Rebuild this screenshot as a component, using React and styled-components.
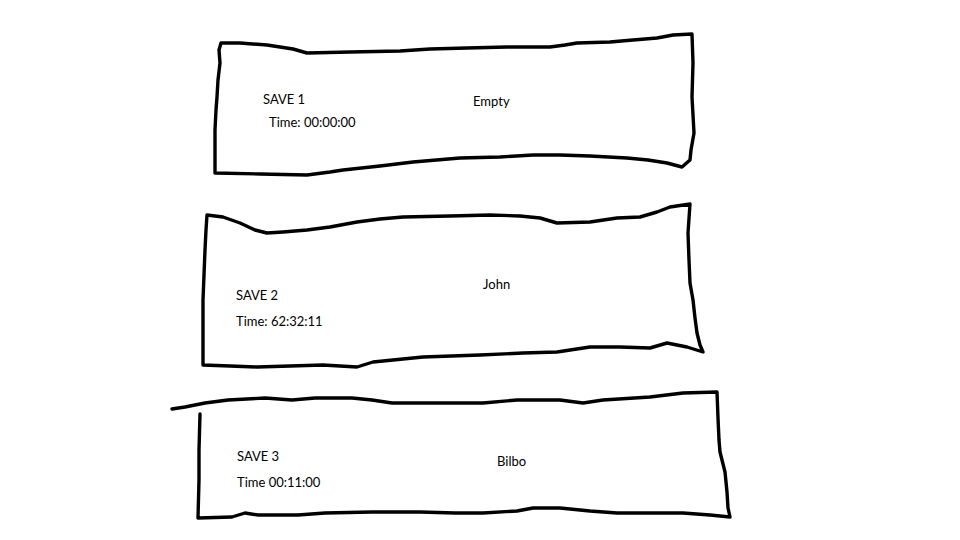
import styled, { createGlobalStyle } from "styled-components";

// sketch data: box placement on the page, outline stroke, text offsets
// --------------------------------------------------------------------

const saves = [
  {
    slot: "SAVE 1",
    time: "Time: 00:00:00",
    name: "Empty",
    box: { left: 211, top: 31, width: 487, height: 147 },
    labelX: 52,
    labelTop: 60,
    timeIndent: 6,
    timeGap: 7,
    nameX: 262,
    nameTop: 62,
    outline:
      "M221,43 L240,43 L267,45 L280,47 L293,49 L307,53 L350,52 L400,51 L430,49 L467,48 L507,47 L550,47 L565,45 L577,43 L610,42 L633,40 L657,38 L673,35 L692,34 L693,63 L692,97 L693,115 L694,133 L691,150 L690,160 L682,167 L667,163 L648,160 L627,158 L590,156 L560,155 L533,155 L500,157 L460,158 L413,162 L380,166 L343,170 L330,172 L307,175 L260,174 L215,173 L215,150 L215,130 L216,110 L217,97 L218,80 L220,63 L219,50 Z",
  },
  {
    slot: "SAVE 2",
    time: "Time: 62:32:11",
    name: "John",
    box: { left: 200, top: 201, width: 507, height: 169 },
    labelX: 36,
    labelTop: 86,
    timeIndent: 0,
    timeGap: 10,
    nameX: 283,
    nameTop: 75,
    outline:
      "M207,215 L223,217 L240,223 L255,230 L267,233 L283,232 L307,230 L330,227 L357,222 L380,219 L403,217 L450,216 L490,215 L520,216 L540,218 L557,223 L590,222 L617,218 L640,217 L657,212 L670,207 L690,204 L688,233 L689,260 L690,283 L693,300 L695,318 L697,333 L700,345 L703,352 L687,347 L667,343 L650,348 L620,347 L590,347 L557,352 L523,353 L480,355 L423,357 L373,362 L357,367 L323,365 L290,366 L257,367 L230,366 L203,365 L203,330 L203,300 L204,275 L205,250 L206,230 Z",
  },
  {
    slot: "SAVE 3",
    time: "Time 00:11:00",
    name: "Bilbo",
    box: { left: 169, top: 390, width: 564, height: 131 },
    labelX: 68,
    labelTop: 58,
    timeIndent: 0,
    timeGap: 10,
    nameX: 328,
    nameTop: 63,
    outline:
      "M172,409 L185,407 L205,403 L228,400 L265,398 L292,400 L315,398 L352,398 L372,400 L392,403 L420,403 L455,403 L483,403 L517,400 L560,400 L583,403 L603,400 L650,397 L683,393 L717,392 L718,418 L719,440 L720,452 L725,472 L727,492 L728,508 L730,517 L710,515 L683,513 L650,513 L617,513 L590,511 L560,508 L533,508 L517,511 L483,513 L455,513 L420,512 L372,512 L325,513 L298,515 L258,515 L245,513 L232,517 L198,518 L199,480 L199,450 L200,414",
  },
];

// adding styles
// ---------------

const GlobalStyle = createGlobalStyle`
  html, body {
    margin: 0;
    background: #ffffff;
  }
  body {
    font-family: Lato, "Open Sans", "Liberation Sans", sans-serif;
    font-size: 13px;
    line-height: 16px;
    color: #000000;
  }
`;

const Page = styled.div`
  display: flex;
  flex-direction: column;
  align-items: flex-start;
  width: 960px;
  height: 540px;
  overflow: hidden;
`;

const SaveCard = styled.div`
  position: relative;
  flex: none;
  margin-left: ${(p) => p.$box.left}px;
  margin-top: ${(p) => p.$gap}px;
  width: ${(p) => p.$box.width}px;
  height: ${(p) => p.$box.height}px;
`;

const Outline = styled.svg`
  position: absolute;
  inset: 0;
  width: 100%;
  height: 100%;
  overflow: visible;
`;

const CardBody = styled.div`
  position: relative;
  display: flex;
  align-items: flex-start;
  padding-left: ${(p) => p.$padX}px;
  padding-top: ${(p) => p.$padTop}px;
`;

const SlotColumn = styled.div`
  flex: none;
  display: flex;
  flex-direction: column;
  width: ${(p) => p.$width}px;
  margin-top: ${(p) => p.$offset}px;
`;

const SlotLabel = styled.div`
  white-space: nowrap;
`;

const PlayTime = styled.div`
  white-space: nowrap;
  margin-top: ${(p) => p.$gap}px;
  margin-left: ${(p) => p.$indent}px;
`;

const PlayerName = styled.div`
  white-space: nowrap;
  margin-top: ${(p) => p.$offset}px;
`;

// rendering components
// ---------------------

const SaveSlot = ({ save, gap }) => {
  const { box } = save;
  const padTop = Math.min(save.labelTop, save.nameTop);
  return (
    <SaveCard $box={box} $gap={gap}>
      <Outline viewBox={`${box.left} ${box.top} ${box.width} ${box.height}`}>
        <path
          d={save.outline}
          fill="none"
          stroke="#000"
          strokeWidth="3.4"
          strokeLinejoin="round"
          strokeLinecap="round"
        />
      </Outline>
      <CardBody $padX={save.labelX} $padTop={padTop}>
        <SlotColumn
          $width={save.nameX - save.labelX}
          $offset={save.labelTop - padTop}
        >
          <SlotLabel>{save.slot}</SlotLabel>
          <PlayTime $gap={save.timeGap} $indent={save.timeIndent}>
            {save.time}
          </PlayTime>
        </SlotColumn>
        <PlayerName $offset={save.nameTop - padTop}>{save.name}</PlayerName>
      </CardBody>
    </SaveCard>
  );
};

const App = () => {
  return (
    <Page>
      <GlobalStyle />
      {saves.map((save, index) => {
        const prev = saves[index - 1];
        const gap = prev
          ? save.box.top - (prev.box.top + prev.box.height)
          : save.box.top;
        return <SaveSlot key={save.slot} save={save} gap={gap} />;
      })}
    </Page>
  );
};

export default App;
